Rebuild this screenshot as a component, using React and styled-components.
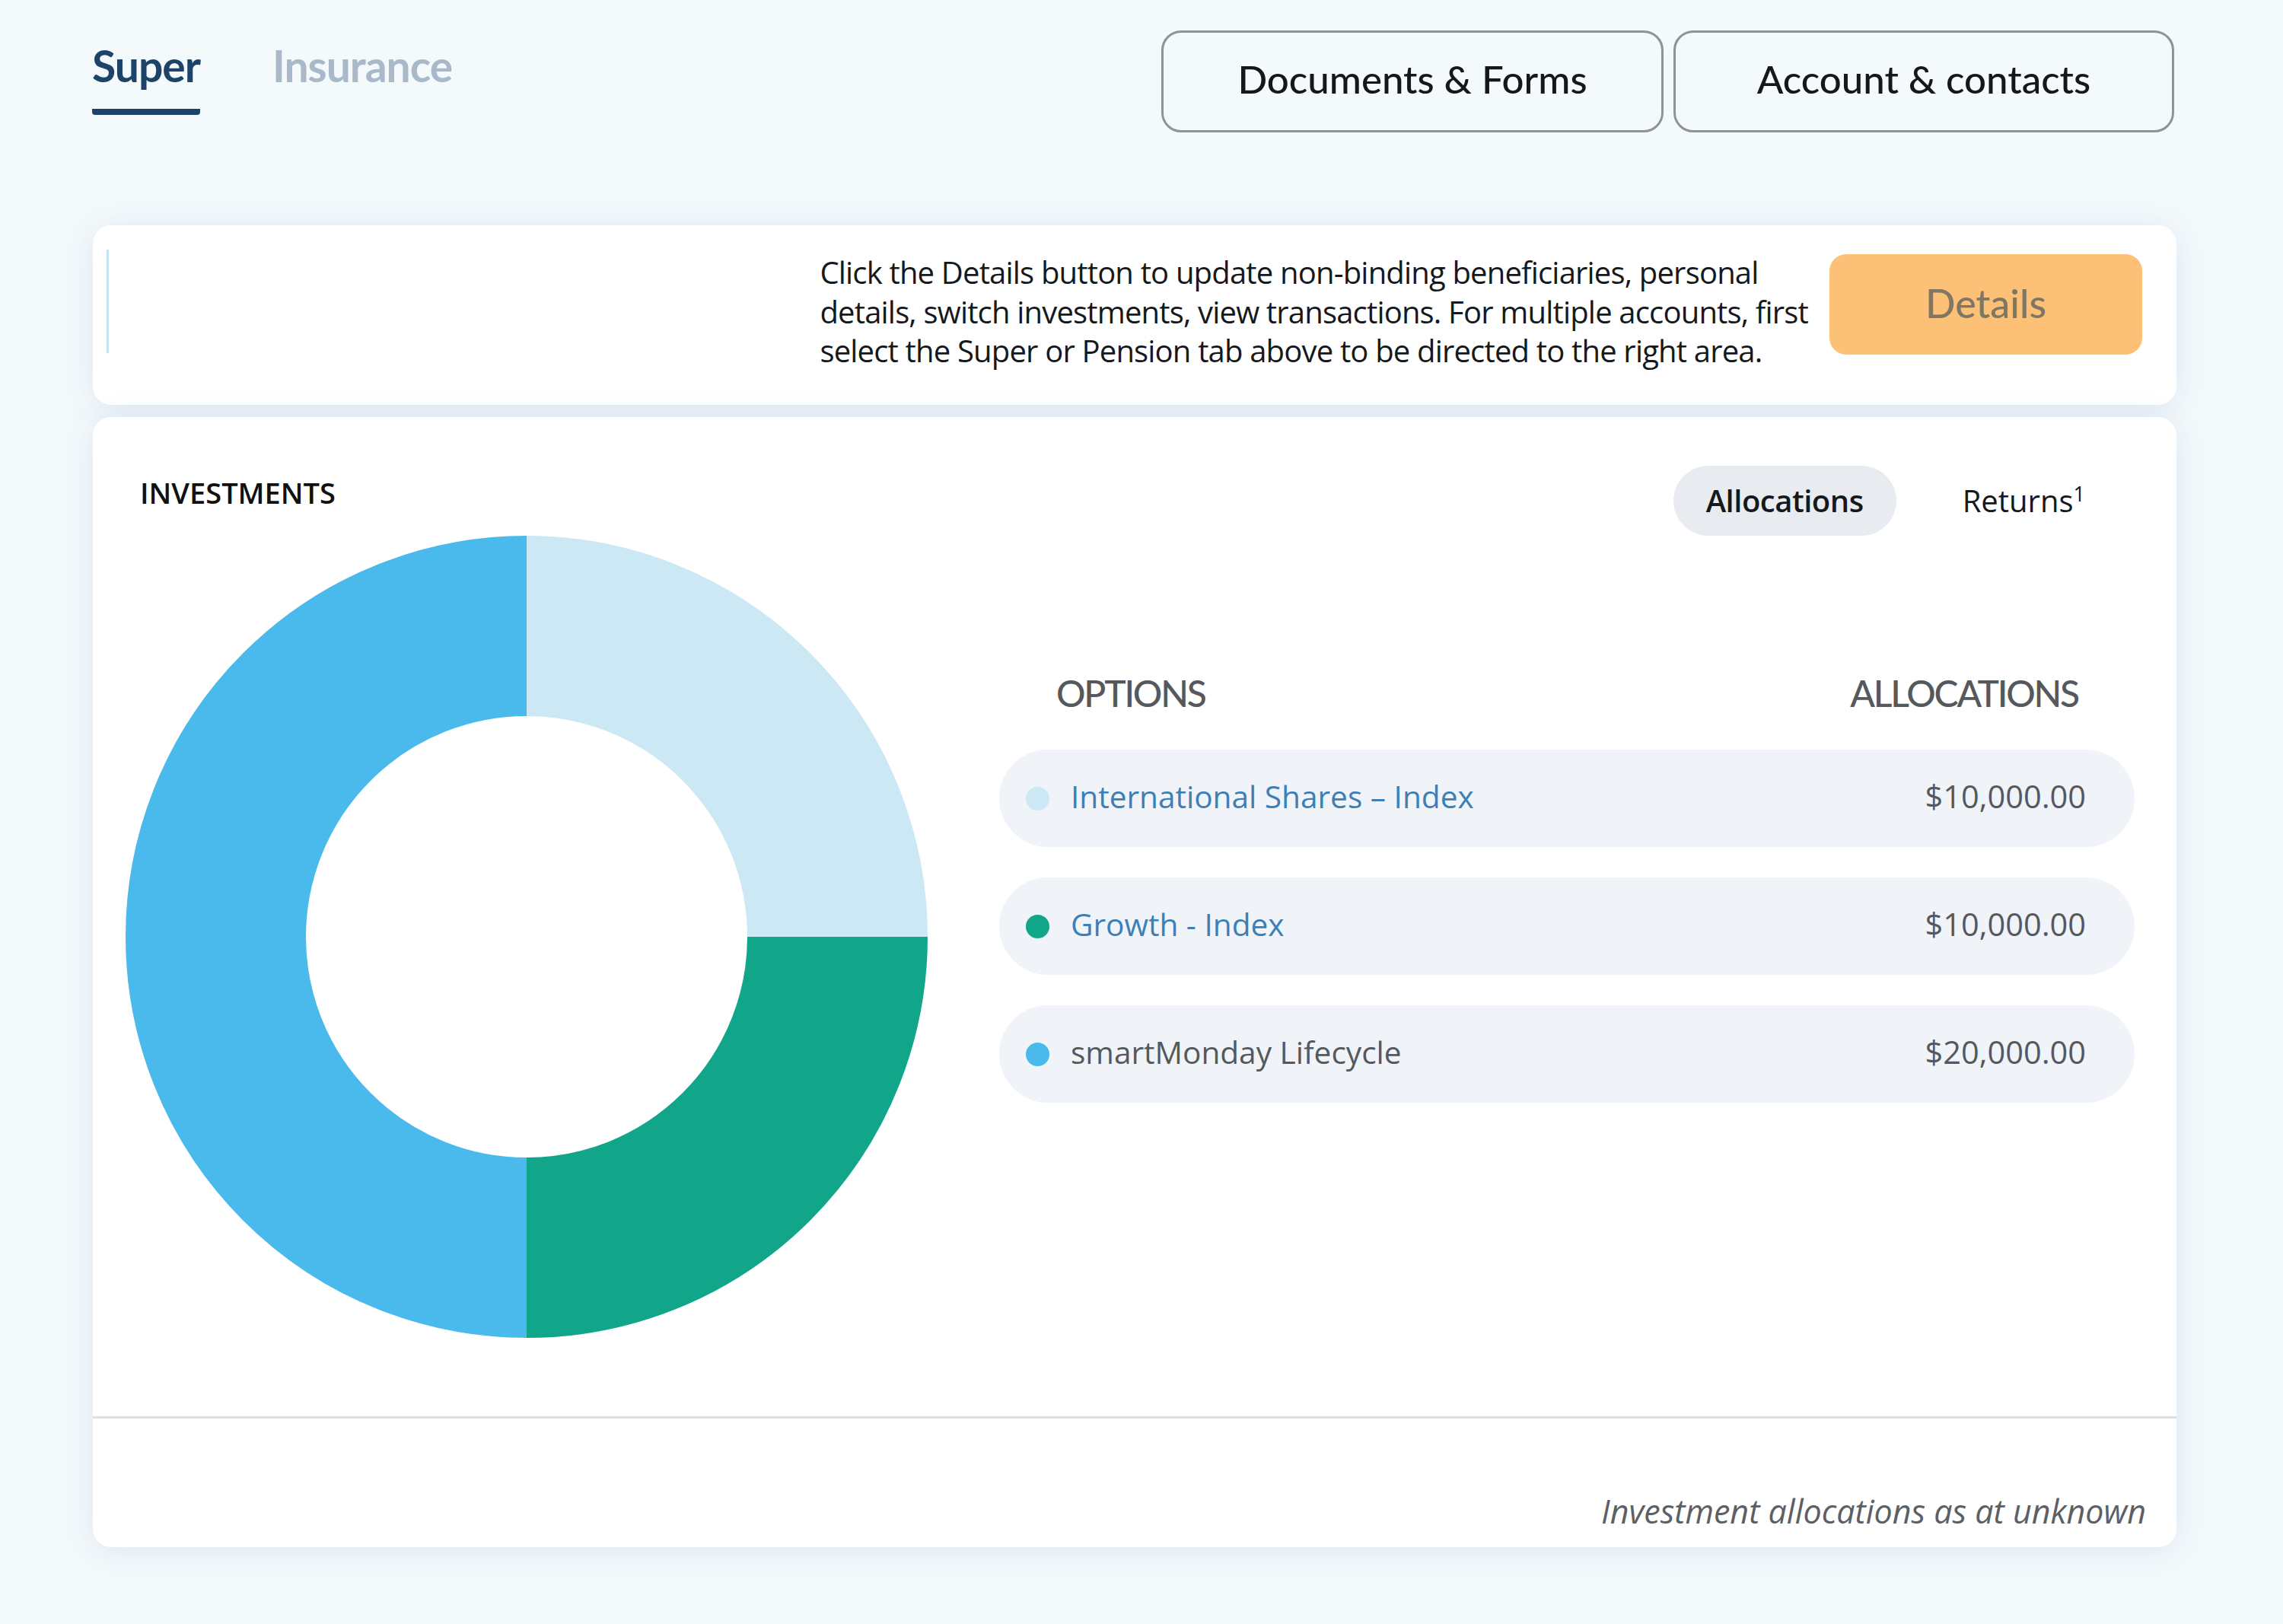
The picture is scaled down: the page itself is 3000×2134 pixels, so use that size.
import styled, { createGlobalStyle } from 'styled-components';

const allocations = [
  { name: 'International Shares – Index', amount: '$10,000.00', share: 25, color: '#cde8f5', link: true },
  { name: 'Growth - Index', amount: '$10,000.00', share: 25, color: '#11a58a', link: true },
  { name: 'smartMonday Lifecycle', amount: '$20,000.00', share: 50, color: '#4ab9ec', link: false },
];

const Donut = () => {
  let offset = 0;
  return (
    <DonutSvg viewBox="0 0 1054 1054">
      {allocations.map((a) => {
        const circle = (
          <circle
            key={a.name}
            cx="527"
            cy="527"
            r="408.5"
            fill="none"
            stroke={a.color}
            strokeWidth="237"
            pathLength="100"
            strokeDasharray={`${a.share} ${100 - a.share}`}
            strokeDashoffset={-offset}
            transform="rotate(-90 527 527)"
          />
        );
        offset += a.share;
        return circle;
      })}
    </DonutSvg>
  );
};

const App = () => {
  return (
    <>
      <GlobalStyle />
      <Page>
        <TopBar>
          <Tabs>
            <Tab $active>Super</Tab>
            <Tab>Insurance</Tab>
          </Tabs>
          <TopActions>
            <OutlineButton $width="660px">Documents &amp; Forms</OutlineButton>
            <OutlineButton $width="658px">Account &amp; contacts</OutlineButton>
          </TopActions>
        </TopBar>

        <Notice>
          <AccentLine />
          <NoticeText>
            Click the Details button to update non-binding beneficiaries, personal
            <br />
            details, switch investments, view transactions. For multiple accounts, first
            <br />
            select the Super or Pension tab above to be directed to the right area.
          </NoticeText>
          <DetailsButton>Details</DetailsButton>
        </Notice>

        <InvestmentsCard>
          <CardHead>
            <CardTitle>INVESTMENTS</CardTitle>
            <Toggle>
              <TogglePill $active>Allocations</TogglePill>
              <TogglePill>
                Returns<sup>1</sup>
              </TogglePill>
            </Toggle>
          </CardHead>
          <CardBody>
            <Donut />
            <OptionsPanel>
              <OptionsHead>
                <span>OPTIONS</span>
                <span>ALLOCATIONS</span>
              </OptionsHead>
              <OptionsList>
                {allocations.map((a) => (
                  <OptionRow key={a.name}>
                    <Dot $color={a.color} />
                    <OptionName $link={a.link}>{a.name}</OptionName>
                    <OptionAmount>{a.amount}</OptionAmount>
                  </OptionRow>
                ))}
              </OptionsList>
            </OptionsPanel>
          </CardBody>
          <CardFoot>Investment allocations as at unknown</CardFoot>
        </InvestmentsCard>
      </Page>
    </>
  );
};

const GlobalStyle = createGlobalStyle`
  html, body {
    margin: 0;
    padding: 0;
    background: #f4f9fc;
  }
  body {
    font-family: "Open Sans", "Liberation Sans", sans-serif;
  }
`;

const Page = styled.div`
  box-sizing: border-box;
  width: 3000px;
  height: 2134px;
  padding: 40px 140px 0 122px;
  background: #f4f9fc;
  overflow: hidden;
`;

const TopBar = styled.div`
  display: flex;
  justify-content: space-between;
  align-items: flex-start;
  height: 256px;
`;

const Tabs = styled.div`
  display: flex;
  gap: 96px;
`;

const Tab = styled.div`
  box-sizing: border-box;
  height: 111px;
  margin-left: -1px;
  padding-top: 10px;
  font-family: "Lato", sans-serif;
  font-size: 57px;
  line-height: 72px;
  font-weight: 700;
  letter-spacing: -1px;
  color: ${(p) => (p.$active ? '#1d4468' : '#a9b9c9')};
  border-bottom: 8px solid ${(p) => (p.$active ? '#1d4468' : 'transparent')};
  border-radius: 0 0 4px 4px;
`;

const TopActions = styled.div`
  display: flex;
  gap: 13px;
  margin-right: 3px;
`;

const OutlineButton = styled.button`
  box-sizing: border-box;
  width: ${(p) => p.$width};
  height: 134px;
  padding: 0 0 7px;
  background: transparent;
  border: 3px solid #8d9399;
  border-radius: 26px;
  font-family: "Lato", sans-serif;
  font-size: 51px;
  font-weight: 500;
  color: #14181c;
`;

const Card = styled.div`
  background: #fff;
  border-radius: 24px;
  box-shadow: 0 4px 44px rgba(40, 80, 120, 0.1);
`;

const Notice = styled(Card)`
  display: flex;
  align-items: flex-start;
  box-sizing: border-box;
  height: 236px;
  padding: 32px 45px 0 18px;
`;

const AccentLine = styled.div`
  width: 3px;
  height: 136px;
  background: #c5e6f0;
`;

const NoticeText = styled.p`
  margin: 4px 28px 0 auto;
  font-size: 40px;
  line-height: 51.5px;
  letter-spacing: -0.82px;
  color: #16191c;
  white-space: nowrap;
`;

const DetailsButton = styled.button`
  flex: none;
  width: 411px;
  height: 132px;
  margin-top: 6px;
  padding: 0 0 4px;
  border: none;
  border-radius: 22px;
  background: #fcc077;
  font-family: "Lato", sans-serif;
  font-size: 52px;
  font-weight: 500;
  color: #7f7663;
`;

const InvestmentsCard = styled(Card)`
  margin-top: 16px;
  height: 1485px;
  box-sizing: border-box;
  padding-top: 64px;
`;

const CardHead = styled.div`
  display: flex;
  justify-content: space-between;
  align-items: flex-start;
  height: 92px;
  padding: 0 120px 0 62px;
`;

const CardTitle = styled.h2`
  margin: 10px 0 0;
  font-size: 38px;
  line-height: 50px;
  font-weight: 600;
  color: #111;
`;

const Toggle = styled.div`
  display: flex;
  align-items: center;
  gap: 87px;
`;

const TogglePill = styled.div`
  box-sizing: border-box;
  height: 92px;
  padding: 0 ${(p) => (p.$active ? '43px' : '0')};
  line-height: 92px;
  border-radius: 46px;
  background: ${(p) => (p.$active ? '#e8ecf1' : 'transparent')};
  font-size: 40px;
  font-weight: ${(p) => (p.$active ? 600 : 400)};
  letter-spacing: ${(p) => (p.$active ? '-0.5px' : '0')};
  color: #16191c;

  sup {
    font-size: 27px;
    line-height: 0;
  }
`;

const CardBody = styled.div`
  display: flex;
  align-items: flex-start;
  gap: 94px;
  height: 1160px;
  padding-left: 43px;
  border-bottom: 3px solid #d9e1e6;
  box-sizing: border-box;
`;

const DonutSvg = styled.svg`
  flex: none;
  width: 1054px;
  height: 1054px;
`;

const OptionsPanel = styled.div`
  width: 1492px;
  padding-top: 176px;
`;

const OptionsHead = styled.div`
  display: flex;
  justify-content: space-between;
  height: 105px;
  padding: 0 74px 0 75px;
  font-family: "Lato", sans-serif;
  font-size: 48px;
  line-height: 62px;
  font-weight: 500;
  letter-spacing: -2.2px;
  color: #55595d;
`;

const OptionsList = styled.div`
  display: flex;
  flex-direction: column;
  gap: 40px;
`;

const OptionRow = styled.div`
  display: flex;
  align-items: center;
  box-sizing: border-box;
  height: 128px;
  padding: 0 64px 6px 35px;
  border-radius: 64px;
  background: #f0f4f9;
  font-size: 40.6px;
`;

const Dot = styled.span`
  flex: none;
  width: 31px;
  height: 31px;
  margin: 6px 28px 0 0;
  border-radius: 50%;
  background: ${(p) => p.$color};
`;

const OptionName = styled.span`
  flex: 1;
  color: ${(p) => (p.$link ? '#3d80b5' : '#55595d')};
`;

const OptionAmount = styled.span`
  font-size: 41.5px;
  color: #55595d;
`;

const CardFoot = styled.div`
  padding: 96px 40px 0 0;
  text-align: right;
  font-size: 43px;
  line-height: 52px;
  font-style: italic;
  color: #5c6064;
`;

export default App;
